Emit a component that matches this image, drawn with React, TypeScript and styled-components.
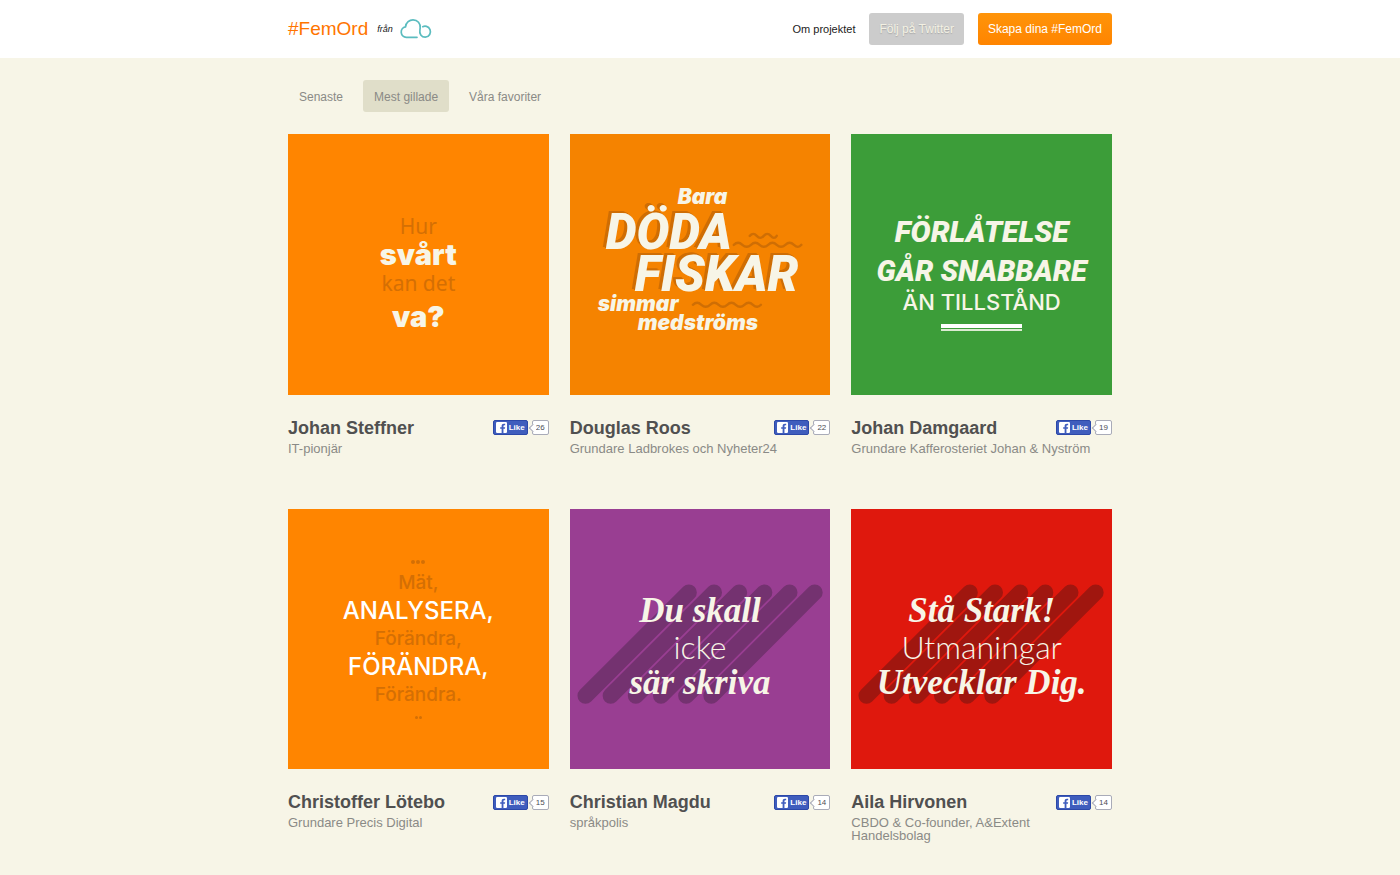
import React from "react";
import styled, { createGlobalStyle, css } from "styled-components";

const GlobalStyle = createGlobalStyle`
  * { box-sizing: border-box; }
  body {
    margin: 0;
    background: #f7f5e7;
    color: #4d4d4d;
    font-family: "Liberation Sans", Arial, sans-serif;
  }
`;

const Container = styled.div`
  max-width: 824px;
  margin: 0 auto;
`;

const Header = styled.header`
  background: #fff;
`;

const HeaderInner = styled(Container)`
  display: flex;
  align-items: center;
  justify-content: space-between;
  height: 58px;
`;

const Brand = styled.div`
  display: flex;
  align-items: center;
  gap: 9px;
`;

const BrandLink = styled.a`
  color: #ff7500;
  font-size: 19px;
  line-height: 24px;
  text-decoration: none;
`;

const From = styled.span`
  color: #111;
  font-size: 9px;
  font-style: italic;
`;

const CloudLink = styled.a`
  display: block;
  height: 22px;
  margin-left: -2px;
`;

const Nav = styled.nav`
  display: flex;
  align-items: center;
  gap: 14px;
`;

const NavLink = styled.a`
  color: #222;
  font-size: 11px;
  text-decoration: none;
`;

const NavButton = styled.button<{ $primary?: boolean }>`
  height: 32px;
  padding: 0 10px;
  border: 0;
  border-radius: 3px;
  font: 12px "Liberation Sans", Arial, sans-serif;
  ${(p) =>
    p.$primary
      ? css`
          background: linear-gradient(#ff9409, #ff8400);
          color: #fff;
        `
      : css`
          background: #ccc;
          color: #f3f1e3;
          text-shadow: 0 1px 1px #aaa;
        `}
`;

const Tabs = styled.div`
  display: flex;
  gap: 9px;
  padding: 22px 0;
`;

const Tab = styled.button<{ $active?: boolean }>`
  height: 32px;
  padding: 2px 11px 0;
  border: 0;
  border-radius: 3px;
  background: ${(p) => (p.$active ? "#e0dec9" : "transparent")};
  color: #8a8a86;
  font: 12px "Liberation Sans", Arial, sans-serif;
`;

const Grid = styled.main`
  display: grid;
  grid-template-columns: repeat(3, 1fr);
  gap: 54px 21px;
  padding-bottom: 31px;
`;

const Card = styled.article`
  display: flex;
  flex-direction: column;
`;

const Poster = styled.div<{ $color: string; $top: number; $ink?: string }>`
  position: relative;
  aspect-ratio: 1;
  overflow: hidden;
  padding-top: ${(p) => p.$top}px;
  background: ${(p) => p.$color};
  color: ${(p) => p.$ink ?? "#f7f5e7"};
`;

const Decoration = styled.svg`
  position: absolute;
  inset: 0;
  width: 100%;
  height: 100%;
`;

const faces = {
  open: css`font-family: "Noto Sans", "Open Sans", sans-serif; font-weight: 400;`,
  heavy: css`font-family: Inter, sans-serif; font-weight: 900;`,
  heavySlant: css`font-family: Inter, sans-serif; font-weight: 900; font-style: italic;`,
  slant: css`font-family: Roboto, sans-serif; font-weight: 900; font-style: italic;`,
  geo: css`font-family: Inter, sans-serif; font-weight: 500;`,
  script: css`font-family: "Liberation Serif", serif; font-weight: 700; font-style: italic;`,
  thin: css`font-family: Lato, sans-serif; font-weight: 300;`,
};

type Face = keyof typeof faces;

const Line = styled.div<{
  $face: Face;
  $size: number;
  $height: number;
  $indent?: number;
  $muted?: boolean;
  $shadow?: boolean;
}>`
  position: relative;
  ${(p) => faces[p.$face]}
  font-size: ${(p) => p.$size}px;
  line-height: ${(p) => p.$height}px;
  white-space: nowrap;
  ${(p) =>
    p.$indent === undefined
      ? css`text-align: center;`
      : css`padding-left: ${p.$indent}px;`}
  ${(p) => p.$muted && css`color: #d46f04;`}
  ${(p) =>
    p.$shadow &&
    css`text-shadow: -1px -1px #cf6e04, -2px -2px #cf6e04, -3px -2px #cf6e04;`}
`;

const Rules = styled.div`
  width: 81px;
  height: 7px;
  margin: 9px auto 0;
  border-top: 4px solid #fff;
  border-bottom: 2px solid #dcebd2;
`;

const Dots = styled.div<{ $height: number }>`
  display: flex;
  align-items: center;
  justify-content: center;
  gap: 1px;
  height: ${(p) => p.$height}px;
`;

const Dot = styled.i<{ $size: number }>`
  width: ${(p) => p.$size}px;
  height: ${(p) => p.$size}px;
  border-radius: 50%;
  background: #d46f04;
`;

const Caption = styled.div`
  display: flex;
  align-items: center;
  justify-content: space-between;
  margin-top: 22px;
`;

const Name = styled.h2`
  margin: 0;
  color: #505050;
  font-size: 18px;
  line-height: 22px;
`;

const Role = styled.p`
  margin: 3px 0 0;
  padding-right: 8px;
  color: #8a8a86;
  font-size: 13px;
  line-height: 13px;
`;

const Like = styled.div`
  display: flex;
  align-items: center;
  gap: 4px;
`;

const LikeButton = styled.button`
  display: flex;
  align-items: center;
  gap: 2px;
  width: 35px;
  height: 15px;
  padding: 0 2px;
  border: 1px solid #2c48a8;
  border-radius: 2px;
  background: #3f5dbd;
  color: #fff;
  font: bold 8px "Liberation Sans", Arial, sans-serif;

  svg {
    flex: none;
  }
`;

const Count = styled.span`
  position: relative;
  width: 17px;
  height: 15px;
  border: 1px solid #a9abb8;
  border-radius: 2px;
  background: #fff;
  color: #4d4d55;
  font-size: 8px;
  line-height: 13px;
  text-align: center;

  &::before {
    content: "";
    position: absolute;
    left: -3px;
    top: 4px;
    width: 5px;
    height: 5px;
    border: solid #a9abb8;
    border-width: 0 0 1px 1px;
    background: #fff;
    transform: rotate(45deg);
  }
`;

const Stripes = ({ color }: { color: string }) => (
  <Decoration viewBox="0 0 261 261" aria-hidden="true">
    <g stroke={color} strokeWidth="16" strokeLinecap="round">
      {[0, 1, 2, 3, 4, 5].map((i) => (
        <line key={i} x1={15.5 + i * 25.2} y1="187" x2={119 + i * 25.2} y2="83.5" />
      ))}
    </g>
  </Decoration>
);

const Waves = () => (
  <Decoration viewBox="0 0 261 261" aria-hidden="true">
    <g fill="none" stroke="#cf6e04" strokeWidth="2.4" strokeLinecap="round">
      <path d="M180 102q3.500-4 7 0t7 0t7 0t6 0" />
      <path d="M164 111q4.300-4 8.600 0t8.600 0t8.600 0t8.600 0t8.600 0t8.600 0t8.600 0t7.500 0" />
      <path d="M123 171q4.300-4 8.600 0t8.600 0t8.600 0t8.600 0t8.600 0t8.600 0t8.600 0t8 0" />
    </g>
  </Decoration>
);

const CloudLogo = () => (
  <svg width="32" height="22" viewBox="0 0 32 22" fill="none" stroke="#5bbcbf" strokeWidth="1.7" strokeLinecap="round">
    <path d="M17 19.300H6.300a5.300 5.300 0 0 1-.8-10.500C6 4.300 9.500 1.800 13 1.800c4.700 0 7.600 3.700 7.200 8.200-.4 2.500-1.200 4.500.6 6.900 2.200 3 6.900 3.100 8.900-.4 1.800-3.200.1-7.200-3.200-8.100-1.400-.4-2.700-.2-3.800.3" />
  </svg>
);

const FacebookMark = () => (
  <svg width="11" height="11" viewBox="0 0 9 9">
    <rect width="9" height="9" rx="1" fill="#fff" />
    <path d="M4.600 9V5.500H3.400V4.200h1.200V3.300c0-1.200.7-1.900 1.900-1.900h1v1.300h-.7c-.5 0-.7.200-.7.700v.8h1.400L7.300 5.500H6.100V9z" fill="#3f5dbd" />
  </svg>
);

const people = [
  {
    name: "Johan Steffner",
    role: "IT-pionjär",
    likes: 26,
    poster: (
      <Poster $color="#ff8500" $top={78}>
        <Line $face="open" $size={21} $height={29} $muted>Hur</Line>
        <Line $face="heavy" $size={29} $height={27}>svårt</Line>
        <Line $face="open" $size={21} $height={31} $muted>kan det</Line>
        <Line $face="heavy" $size={29} $height={36}>va?</Line>
      </Poster>
    ),
  },
  {
    name: "Douglas Roos",
    role: "Grundare Ladbrokes och Nyheter24",
    likes: 22,
    poster: (
      <Poster $color="#f58300" $top={49}>
        <Waves />
        <Line $face="heavySlant" $size={21} $height={28} $indent={108}>Bara</Line>
        <Line $face="slant" $size={49} $height={44} $indent={36} $shadow>DÖDA</Line>
        <Line $face="slant" $size={49} $height={40} $indent={65} $shadow>FISKAR</Line>
        <Line $face="heavySlant" $size={21} $height={18} $indent={28}>simmar</Line>
        <Line $face="heavySlant" $size={21} $height={20} $indent={68}>medströms</Line>
      </Poster>
    ),
  },
  {
    name: "Johan Damgaard",
    role: "Grundare Kafferosteriet Johan & Nyström",
    likes: 19,
    poster: (
      <Poster $color="#3c9d39" $top={78}>
        <Line $face="slant" $size={30} $height={40}>FÖRLÅTELSE</Line>
        <Line $face="slant" $size={29} $height={38}>GÅR SNABBARE</Line>
        <Line $face="geo" $size={22} $height={25}>ÄN TILLSTÅND</Line>
        <Rules />
      </Poster>
    ),
  },
  {
    name: "Christoffer Lötebo",
    role: "Grundare Precis Digital",
    likes: 15,
    poster: (
      <Poster $color="#ff8500" $top={46} $ink="#fff">
        <Dots $height={14}>
          <Dot $size={4} />
          <Dot $size={4} />
          <Dot $size={4} />
        </Dots>
        <Line $face="geo" $size={19} $height={28} $muted>Mät,</Line>
        <Line $face="geo" $size={24} $height={28}>ANALYSERA,</Line>
        <Line $face="geo" $size={19} $height={28} $muted>Förändra,</Line>
        <Line $face="geo" $size={24} $height={28}>FÖRÄNDRA,</Line>
        <Line $face="geo" $size={19} $height={28} $muted>Förändra.</Line>
        <Dots $height={18}>
          <Dot $size={3} />
          <Dot $size={3} />
        </Dots>
      </Poster>
    ),
  },
  {
    name: "Christian Magdu",
    role: "språkpolis",
    likes: 14,
    poster: (
      <Poster $color="#993e92" $top={84}>
        <Stripes color="#743270" />
        <Line $face="script" $size={35} $height={36}>Du skall</Line>
        <Line $face="thin" $size={32} $height={36}>icke</Line>
        <Line $face="script" $size={35} $height={36}>sär skriva</Line>
      </Poster>
    ),
  },
  {
    name: "Aila Hirvonen",
    role: "CBDO & Co-founder, A&Extent Handelsbolag",
    likes: 14,
    poster: (
      <Poster $color="#df180d" $top={84}>
        <Stripes color="#a0160f" />
        <Line $face="script" $size={35} $height={36}>Stå Stark!</Line>
        <Line $face="thin" $size={32} $height={36}>Utmaningar</Line>
        <Line $face="script" $size={35} $height={36}>Utvecklar Dig.</Line>
      </Poster>
    ),
  },
];

export default function App() {
  return (
    <>
      <GlobalStyle />
      <Header>
        <HeaderInner>
          <Brand>
            <BrandLink href="#">#FemOrd</BrandLink>
            <From>från</From>
            <CloudLink href="#" aria-label="Moln">
              <CloudLogo />
            </CloudLink>
          </Brand>
          <Nav>
            <NavLink href="#">Om projektet</NavLink>
            <NavButton>Följ på Twitter</NavButton>
            <NavButton $primary>Skapa dina #FemOrd</NavButton>
          </Nav>
        </HeaderInner>
      </Header>
      <Container>
        <Tabs>
          <Tab>Senaste</Tab>
          <Tab $active>Mest gillade</Tab>
          <Tab>Våra favoriter</Tab>
        </Tabs>
        <Grid>
          {people.map((p) => (
            <Card key={p.name}>
              {p.poster}
              <Caption>
                <Name>{p.name}</Name>
                <Like>
                  <LikeButton>
                    <FacebookMark />
                    Like
                  </LikeButton>
                  <Count>{p.likes}</Count>
                </Like>
              </Caption>
              <Role>{p.role}</Role>
            </Card>
          ))}
        </Grid>
      </Container>
    </>
  );
}
